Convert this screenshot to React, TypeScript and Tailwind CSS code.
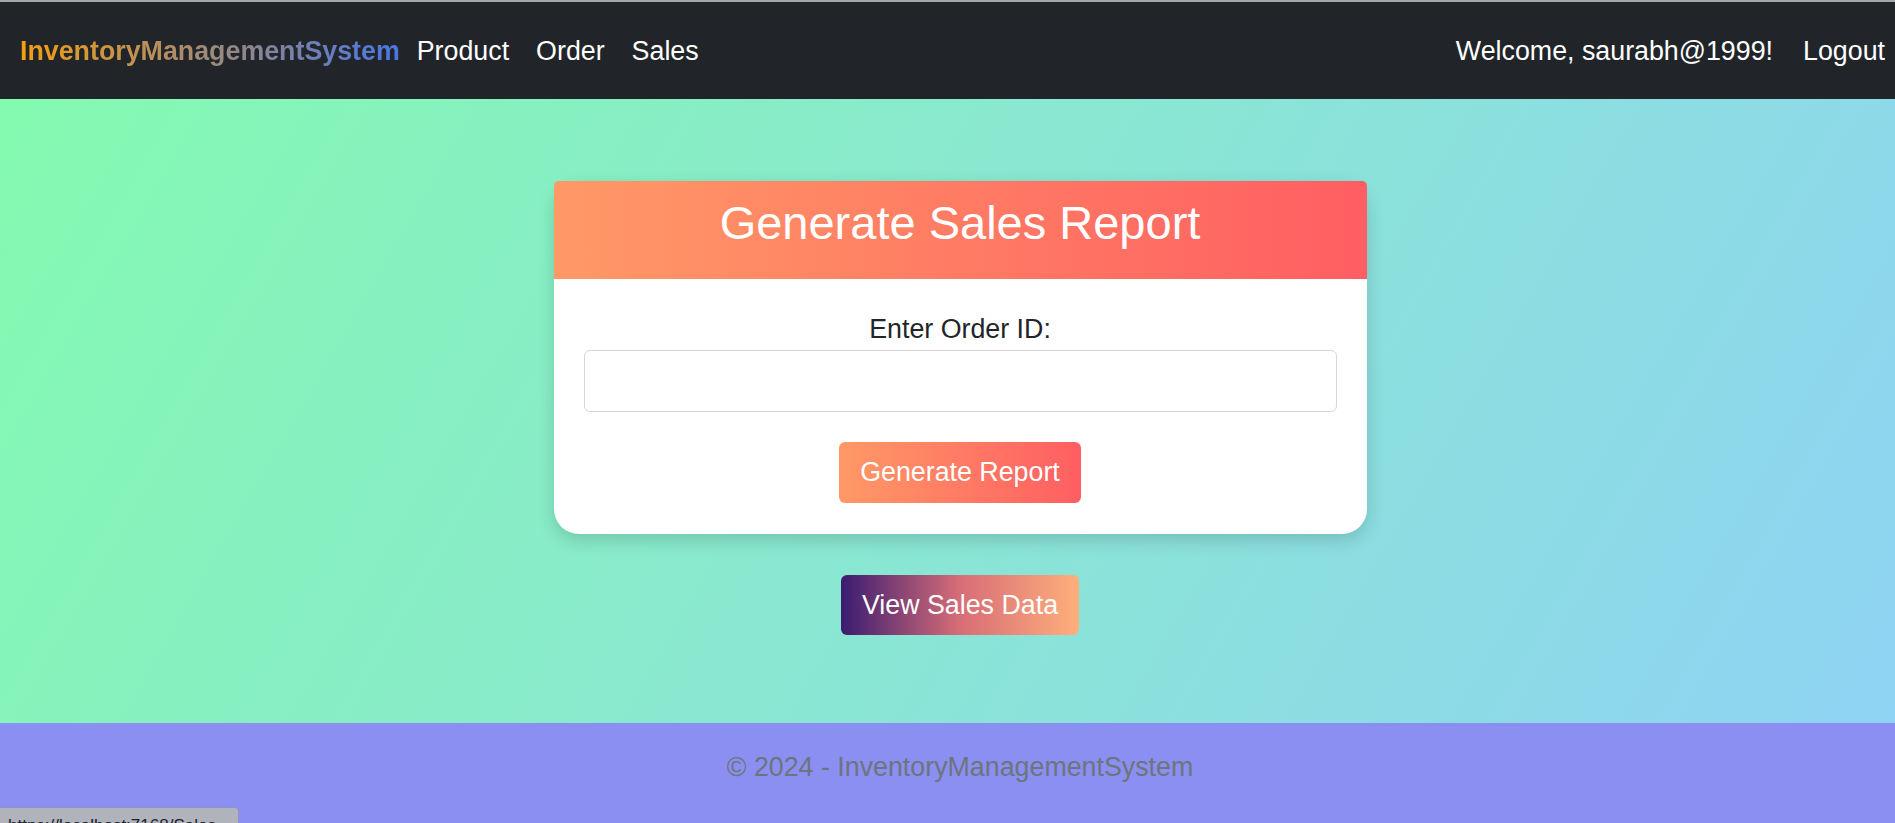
import React from 'react';

const navLinks = ['Product', 'Order', 'Sales'];

export default function App() {
  return (
    <div className="relative flex h-[823px] flex-col overflow-hidden font-['Liberation_Sans',Arial,sans-serif] text-[26.8px]">
      {/* top browser edge */}
      <div className="h-[2px] bg-[#a5a6a8]" />

      {/* Navbar */}
      <nav className="flex h-[97px] items-center justify-between bg-[#212529] pl-[20px] pr-[10px] leading-[40px]">
        <div className="flex items-center">
          <a className="mr-[17px] bg-[linear-gradient(90deg,#f49e10,#4876e6)] bg-clip-text font-bold text-transparent">
            InventoryManagementSystem
          </a>
          <div className="flex items-center gap-[27px]">
            {navLinks.map((link) => (
              <a key={link} className="text-white">
                {link}
              </a>
            ))}
          </div>
        </div>
        <div className="flex items-center gap-[30px] text-white">
          <span>Welcome, saurabh@1999!</span>
          <a>Logout</a>
        </div>
      </nav>

      {/* Main */}
      <main className="flex h-[624px] flex-col items-center bg-[linear-gradient(120deg,#84fab0_0%,#8fd3f4_100%)] pl-[25px] pt-[82px]">
        <div className="w-[813px] rounded-[25px] bg-white shadow-[0_6px_18px_rgba(0,0,0,0.16)]">
          {/* Card header */}
          <div className="h-[98px] rounded-t-[5px] bg-[linear-gradient(90deg,#ff9966,#ff5e62)] pt-[14px] text-center text-[47px] leading-[56px] text-white">
            Generate Sales Report
          </div>

          {/* Card body */}
          <div className="flex flex-col items-center px-[30px] pb-[31px] pt-[34px]">
            <label className="mb-[5px] leading-[32px] text-[#212529]">Enter Order ID:</label>
            <input
              type="text"
              className="h-[62px] w-full rounded-[6px] border border-[#d3d6da] bg-white px-[20px] outline-none"
            />
            <button className="mt-[30px] flex h-[61px] w-[242px] items-center justify-center rounded-[6px] bg-[linear-gradient(90deg,#ff9966,#ff5e62)] text-white">
              Generate Report
            </button>
          </div>
        </div>

        <button className="mt-[41px] flex h-[60px] w-[238px] items-center justify-center rounded-[6px] bg-[linear-gradient(90deg,#3a1c71,#d76d77,#ffaf7b)] text-white">
          View Sales Data
        </button>
      </main>

      {/* Footer */}
      <footer className="flex h-[100px] items-center justify-center bg-[#8b8ff1] pb-[12px] pl-[25px] text-[#6c757d]">
        © 2024 - InventoryManagementSystem
      </footer>

      {/* browser status bubble */}
      <div className="absolute bottom-0 left-0 h-[16px] w-[239px] overflow-hidden rounded-tr-[4px] border-r border-t border-[#8e92c9] bg-[#b0b2bc] pl-[8px] pt-[9px] text-[17px] leading-[17px] text-[#202124]">
        https://localhost:7168/Sales
      </div>
    </div>
  );
}
